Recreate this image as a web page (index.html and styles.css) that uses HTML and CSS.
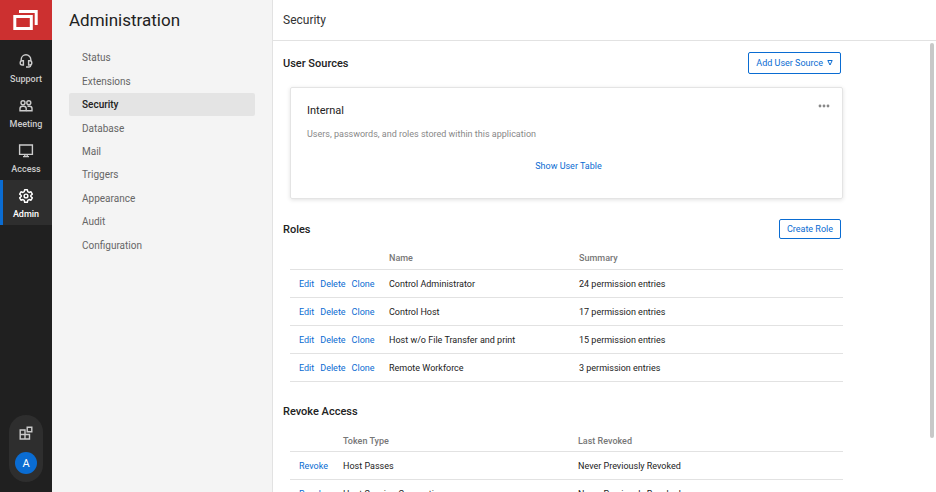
FILE: index.html
```html
<!DOCTYPE html>
<html lang="en">
<head>
<meta charset="UTF-8">
<meta name="viewport" content="width=device-width, initial-scale=1.0">
<title>Administration - Security</title>
<link rel="stylesheet" href="styles.css">
</head>
<body>

<!-- Main navigation -->
<nav class="rail">
<a class="logo" href="#" aria-label="Home">
<svg width="26" height="21" viewBox="0 0 26 21" fill="none" stroke="#fff" stroke-width="3">
<path d="M6 1.500h17.200V15"/>
<path d="M1.800 6.500h16.500v12H1.800z"/>
</svg>
</a>
<ul class="rail-list">
<li><a class="rail-item" href="#">
<svg width="16" height="16" viewBox="0 0 16 16" fill="none" stroke="currentColor" stroke-width="1.4">
<path d="M3.2 8V6.600a4.800 4.800 0 0 1 9.600 0V8"/>
<path d="M5.400 7.800v4.200H4.300a2.100 2.100 0 0 1 0-4.200zM10.600 7.800v4.200h1.100a2.100 2.100 0 0 0 0-4.200z"/>
<path d="M12.800 11.500v.8a1.700 1.700 0 0 1-1.700 1.700H8"/>
</svg>
<span>Support</span></a></li>
<li><a class="rail-item" href="#">
<svg width="16" height="16" viewBox="0 0 16 16" fill="none" stroke="currentColor" stroke-width="1.4">
<circle cx="5" cy="4.800" r="2"/>
<circle cx="10.800" cy="4.800" r="2"/>
<path d="M2 12.800v-2.200a2.400 2.400 0 0 1 2.400-2.400h1.400a2.400 2.400 0 0 1 2.400 2.400v2.200z"/>
<path d="M9.500 8.200h2.100a2.400 2.400 0 0 1 2.400 2.400v2.200H8.500"/>
</svg>
<span>Meeting</span></a></li>
<li><a class="rail-item" href="#">
<svg width="16" height="16" viewBox="0 0 16 16" fill="none" stroke="currentColor" stroke-width="1.4">
<path d="M1.600 2h12.800v9.400H1.600zM6.800 11.400v2M9.200 11.400v2M5 13.600h6"/>
</svg>
<span>Access</span></a></li>
<li><a class="rail-item active" href="#">
<svg width="16" height="16" viewBox="0 0 24 24" fill="none" stroke="currentColor" stroke-width="2.200" stroke-linejoin="round">
<path d="M10 2.500h4l.6 3 2 1.200 2.900-1 2 3.500-2.300 2v1.600l2.300 2-2 3.500-2.900-1-2 1.200-.6 3h-4l-.6-3-2-1.200-2.900 1-2-3.500 2.300-2v-1.600l-2.300-2 2-3.500 2.900 1 2-1.200z"/>
<circle cx="12" cy="12" r="2.800"/>
</svg>
<span>Admin</span></a></li>
</ul>
<div class="dock">
<button class="dock-btn" type="button" aria-label="Extensions">
<svg width="14" height="14" viewBox="0 0 14 14" fill="none" stroke="currentColor" stroke-width="1.400">
<path d="M1.200 4h4.800v9H1.200zM1.200 8.500h9.300V13H6"/>
<path d="M8.200 1.200h4.600v4.600H8.200z"/>
</svg>
</button>
<button class="avatar" type="button">A</button>
</div>
</nav>

<!-- Administration menu -->
<aside class="sidebar">
<h1>Administration</h1>
<ul class="menu">
<li><a href="#">Status</a></li>
<li><a href="#">Extensions</a></li>
<li><a class="active" href="#">Security</a></li>
<li><a href="#">Database</a></li>
<li><a href="#">Mail</a></li>
<li><a href="#">Triggers</a></li>
<li><a href="#">Appearance</a></li>
<li><a href="#">Audit</a></li>
<li><a href="#">Configuration</a></li>
</ul>
</aside>

<main class="main">
<header class="topbar"><h2>Security</h2></header>
<div class="scroll-wrap">
<div class="scroll">
<div class="content">

<!-- User sources -->
<section>
<div class="section-head">
<h3>User Sources</h3>
<button class="btn btn-menu" type="button">Add User Source
<svg width="6" height="6" viewBox="0 0 6 6" fill="none" stroke="currentColor"><path d="M.8.500h4.400L3 5z"/></svg>
</button>
</div>
<div class="card">
<div class="card-head">
<h4>Internal</h4>
<button class="more" type="button" aria-label="More options">
<svg width="12" height="4" viewBox="0 0 12 4" fill="currentColor"><circle cx="2" cy="2" r="1.400"/><circle cx="6" cy="2" r="1.400"/><circle cx="10" cy="2" r="1.400"/></svg>
</button>
</div>
<p>Users, passwords, and roles stored within this application</p>
<a class="show-users" href="#">Show User Table</a>
</div>
</section>

<!-- Roles -->
<section class="block">
<div class="section-head">
<h3>Roles</h3>
<button class="btn" type="button">Create Role</button>
</div>
<table class="roles">
<thead>
<tr><th class="col-actions"></th><th class="col-name">Name</th><th>Summary</th></tr>
</thead>
<tbody>
<tr><td><div class="actions"><a href="#">Edit</a><a href="#">Delete</a><a href="#">Clone</a></div></td><td>Control Administrator</td><td>24 permission entries</td></tr>
<tr><td><div class="actions"><a href="#">Edit</a><a href="#">Delete</a><a href="#">Clone</a></div></td><td>Control Host</td><td>17 permission entries</td></tr>
<tr><td><div class="actions"><a href="#">Edit</a><a href="#">Delete</a><a href="#">Clone</a></div></td><td>Host w/o File Transfer and print</td><td>15 permission entries</td></tr>
<tr><td><div class="actions"><a href="#">Edit</a><a href="#">Delete</a><a href="#">Clone</a></div></td><td>Remote Workforce</td><td>3 permission entries</td></tr>
</tbody>
</table>
</section>

<!-- Revoke access -->
<section class="block">
<div class="section-head">
<h3>Revoke Access</h3>
</div>
<table class="revoke">
<thead>
<tr><th class="col-actions"></th><th class="col-name">Token Type</th><th>Last Revoked</th></tr>
</thead>
<tbody>
<tr><td><a href="#">Revoke</a></td><td>Host Passes</td><td>Never Previously Revoked</td></tr>
<tr><td><a href="#">Revoke</a></td><td>Host Session Connections</td><td>Never Previously Revoked</td></tr>
</tbody>
</table>
</section>

</div>
</div>
<div class="scrollbar"><div class="thumb"></div></div>
</div>
</main>

</body>
</html>
```
FILE: styles.css
```css
*{
box-sizing:border-box;
}

body{
margin:0;
height:100vh;
display:flex;
overflow:hidden;
font-family:Roboto, "Liberation Sans", Arial, sans-serif;
font-size:9px;
color:#222;
background:#fff;
}

h1,h2,h3,h4,p,ul{
margin:0;
padding:0;
}

ul{
list-style:none;
}

a{
color:#0a6cd2;
text-decoration:none;
}

button{
font-family:inherit;
cursor:pointer;
}

/* Rail */
.rail{
flex:none;
width:52px;
display:flex;
flex-direction:column;
background:#202020;
}

.logo{
display:flex;
justify-content:center;
align-items:center;
height:40px;
margin-bottom:5px;
background:#cc3030;
}

.logo svg{
display:block;
}

.rail-item{
display:flex;
flex-direction:column;
align-items:center;
gap:5px;
height:45px;
padding:8px 3px 0 0;
border-left:3px solid transparent;
color:#ccc;
font-weight:500;
line-height:11px;
}

.rail-item.active{
background:#2e2e2e;
border-left-color:#0a6cd2;
color:#fff;
}

.dock{
display:flex;
flex-direction:column;
align-items:center;
gap:12px;
width:34px;
margin:auto auto 10px;
padding:11px 0 8px;
border-radius:17px;
background:#2e2e2e;
}

.dock-btn{
display:flex;
padding:0;
border:0;
background:none;
color:#ccc;
}

.avatar{
width:22px;
height:22px;
padding:0;
border:0;
border-radius:50%;
background:#0a6cd2;
color:#fff;
font-size:11px;
}

/* Sidebar */
.sidebar{
flex:none;
width:221px;
padding:8px 17px;
border-right:1px solid #e2e2e2;
background:#f4f4f4;
}

.sidebar h1{
font-size:17px;
font-weight:400;
line-height:24px;
}

.menu{
display:grid;
grid-auto-rows:1fr;
height:211px;
margin-top:14px;
}

.menu a{
display:flex;
align-items:center;
height:100%;
padding-left:13px;
border-radius:2px;
color:#666;
font-size:10px;
}

.menu a.active{
background:#e4e4e4;
color:#222;
font-weight:500;
}

/* Main */
.main{
flex:1;
min-width:0;
display:flex;
flex-direction:column;
}

.topbar{
flex:none;
display:flex;
align-items:center;
height:41px;
padding-left:10px;
border-bottom:1px solid #e2e2e2;
}

.topbar h2{
font-size:12px;
font-weight:400;
color:#333;
}

.scroll-wrap{
flex:1;
min-height:0;
display:flex;
padding:2px 2px 0 0;
}

.scroll{
flex:1;
overflow-y:auto;
scrollbar-width:none;
}

.scrollbar{
width:4px;
}

.thumb{
height:88%;
border-radius:2px;
background:#c8c8c8;
}

.content{
max-width:570px;
padding:9px 0 16px 10px;
}

.section-head{
display:flex;
justify-content:space-between;
align-items:center;
height:22px;
padding-right:2px;
}

.section-head h3{
font-size:11px;
font-weight:500;
}

.btn{
height:20px;
padding:0 7px;
border:1px solid #0a6cd2;
border-radius:2px;
background:#fff;
color:#0a6cd2;
font-size:9px;
}

.btn-menu{
display:flex;
align-items:center;
gap:4px;
height:22px;
}

/* Card */
.card{
display:flex;
flex-direction:column;
height:112px;
margin:13px 0 0 7px;
padding:16px 12px 16px 16px;
border:1px solid #e4e4e4;
border-radius:2px;
box-shadow:0 1px 4px rgba(0,0,0,0.12);
}

.card-head{
display:flex;
justify-content:space-between;
}

.card h4{
font-size:11px;
font-weight:400;
line-height:14px;
}

.card p{
margin-top:10px;
color:#888;
line-height:12px;
}

.more{
display:flex;
height:4px;
padding:0;
border:0;
background:none;
color:#888;
}

.show-users{
align-self:center;
margin-top:20px;
line-height:12px;
}

/* Tables */
.block{
margin-top:19px;
}

table{
width:calc(100% - 7px);
margin-left:7px;
border-collapse:collapse;
table-layout:fixed;
}

th,
td{
height:28px;
padding:1px 0 0 9px;
border-bottom:1px solid #e2e2e2;
text-align:left;
}

th{
height:29px;
padding-top:8px;
color:#777;
font-weight:500;
}

.roles .col-actions{
width:90px;
}

.roles .col-name{
width:190px;
}

.revoke .col-actions{
width:44px;
}

.revoke .col-name{
width:235px;
}

.actions{
display:flex;
gap:6px;
}
```
